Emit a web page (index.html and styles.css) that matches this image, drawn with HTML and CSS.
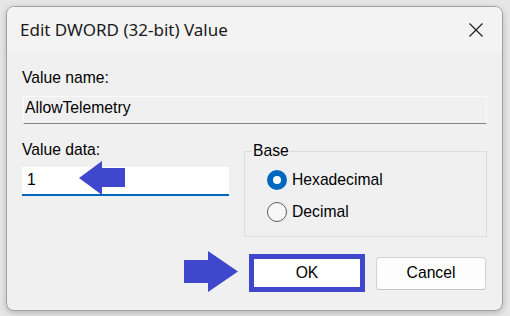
FILE: index.html
```html
<!DOCTYPE html>
<html>
<head>
<meta charset="utf-8">
<link rel="stylesheet" href="styles.css">
</head>
<body>
<div class="window">
  <div class="titlebar">
    <span class="title">Edit DWORD (32-bit) Value</span>
    <svg class="close" width="14" height="14" viewBox="0 0 14 14"><path d="M0.5 0.5 L13.5 13.5 M13.5 0.5 L0.5 13.5" stroke="#1a1a1a" stroke-width="1.1" fill="none"/></svg>
  </div>
  <div class="content">
    <div class="label first">Value name:</div>
    <div class="namefield">AllowTelemetry</div>
    <div class="row">
      <div class="datacol">
        <div class="label">Value data:</div>
        <div class="datafield">1</div>
      </div>
      <fieldset class="base">
        <legend>Base</legend>
        <div class="radio-row first-radio"><span class="radio checked"></span><span>Hexadecimal</span></div>
        <div class="radio-row"><span class="radio"></span><span>Decimal</span></div>
      </fieldset>
    </div>
    <div class="buttons">
      <div class="btn ok">OK</div>
      <div class="btn cancel">Cancel</div>
    </div>
  </div>
  <svg class="arrow arrow-left" width="46" height="34" viewBox="0 0 46 34"><polygon points="0,17 23,0 23,7 46,7 46,26 23,26 23,34" fill="#3f48cc"/></svg>
  <svg class="arrow arrow-right" width="54" height="41" viewBox="0 0 54 41"><polygon points="0,9 24,9 24,0 54,20.5 24,41 24,32 0,32" fill="#3f48cc"/></svg>
</div>
</body>
</html>
```
FILE: styles.css
```css
html, body {
  margin: 0;
  padding: 0;
}
body {
  background: #e6e6e6;
  width: 510px;
  height: 316px;
  overflow: hidden;
  font-family: "Liberation Sans", Arial, sans-serif;
  font-size: 15.7px;
  color: #000;
}
.window {
  position: relative;
  box-sizing: border-box;
  margin: 6px 0 0 6px;
  width: 497px;
  height: 305px;
  border: 1px solid #a2a2a2;
  border-radius: 8px;
  background: #f0f0f0;
  box-shadow: 0 2px 6px rgba(0, 0, 0, 0.22);
  overflow: hidden;
}
.titlebar {
  height: 45px;
  background: #f3f3f3;
  display: flex;
  align-items: center;
  justify-content: space-between;
  padding: 0 19px 0 13px;
}
.title {
  font-family: "Noto Sans", "Segoe UI", sans-serif;
  font-size: 17px;
  color: #1a1a1a;
}
.close {
  display: block;
}
.content {
  padding: 0 15px;
}
.label {
  line-height: 18px;
  height: 18px;
}
.label.first {
  padding-top: 17px;
}
.namefield {
  box-sizing: border-box;
  margin: 9px 0 0 1px;
  height: 28px;
  border: 1px solid #fbfbfb;
  border-bottom-color: #858585;
  padding: 2px 0 0 1px;
  line-height: 18px;
}
.row {
  display: flex;
  margin-top: 17px;
  gap: 15px;
}
.datacol {
  width: 207px;
}
.datafield {
  box-sizing: border-box;
  margin-top: 8px;
  height: 29px;
  background: #fff;
  border-bottom: 2px solid #0067c0;
  padding: 4px 0 0 5px;
  line-height: 18px;
}
.base {
  box-sizing: border-box;
  margin: 1px 0 0 0;
  width: 243px;
  border: 1px solid #dcdcdc;
  padding: 0 0 14px 7px;
  min-width: 0;
}
.base legend {
  padding: 0 1px;
  line-height: 18px;
}
.radio-row {
  display: flex;
  align-items: center;
  gap: 5px;
  height: 20px;
  line-height: 20px;
  margin: 12px 0 0 15px;
}
.radio-row.first-radio {
  margin-top: 10px;
}
.radio {
  box-sizing: border-box;
  width: 20px;
  height: 20px;
  border-radius: 50%;
  border: 1px solid #5c5c5c;
  background: #f7f7f7;
  position: relative;
}
.radio.checked {
  border: 6px solid #0067c0;
  background: #fff;
}
.buttons {
  display: flex;
  justify-content: flex-end;
  align-items: center;
  gap: 11px;
  margin: 17px 1px 0 0;
}
.btn {
  box-sizing: border-box;
  display: flex;
  align-items: center;
  justify-content: center;
  background: #fdfdfd;
}
.ok {
  width: 116px;
  height: 38px;
  border: 5px solid #3f48cc;
  background: #fff;
}
.cancel {
  width: 110px;
  height: 33px;
  border: 1px solid #d3d3d3;
  border-bottom-color: #c4c4c4;
  border-radius: 4px;
}
.arrow {
  position: absolute;
  display: block;
}
.arrow-left {
  left: 72px;
  top: 154px;
}
.arrow-right {
  left: 177px;
  top: 244px;
}
```
